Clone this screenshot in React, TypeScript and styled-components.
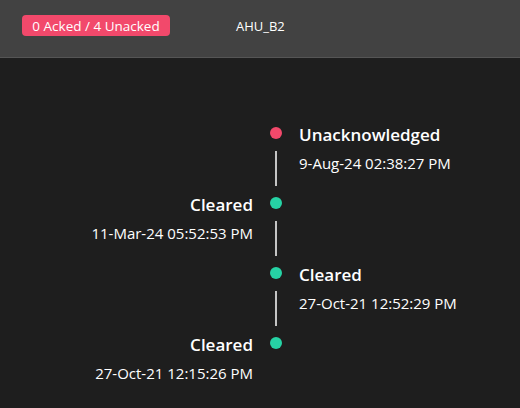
import styled, { createGlobalStyle } from 'styled-components'

const GlobalStyle = createGlobalStyle`
  html, body {
    margin: 0;
    padding: 0;
    background: #1e1e1e;
    font-family: "Open Sans", "Noto Sans", sans-serif;
    color: #ffffff;
  }
`;

interface IAlarmEvent {
  state: string;
  time: string;
  kind: 'unacked' | 'cleared';
  side: 'left' | 'right';
}

const events: IAlarmEvent[] = [
  { state: "Unacknowledged", time: "9-Aug-24 02:38:27 PM", kind: 'unacked', side: 'right' },
  { state: "Cleared", time: "11-Mar-24 05:52:53 PM", kind: 'cleared', side: 'left' },
  { state: "Cleared", time: "27-Oct-21 12:52:29 PM", kind: 'cleared', side: 'right' },
  { state: "Cleared", time: "27-Oct-21 12:15:26 PM", kind: 'cleared', side: 'left' },
];

const Page = styled.div`
  width: 520px;
  height: 408px;
  overflow: hidden;
  background: #1e1e1e;
`;

const Header = styled.header`
  height: 57px;
  display: flex;
  align-items: center;
  gap: 66px;
  padding: 0 0 0 22px;
  background: #424242;
  border-bottom: 1px solid #555555;
`;

const Badge = styled.span`
  display: inline-flex;
  align-items: center;
  justify-content: center;
  width: 148px;
  height: 21px;
  margin-top: -6px;
  border-radius: 4px;
  background: #f2496b;
  color: #ffffff;
  font-size: 13.5px;
`;

const Device = styled.span`
  margin-top: -6px;
  font-size: 13px;
  color: #ffffff;
`;

const Timeline = styled.div`
  padding-top: 69px;
`;

const Item = styled.div`
  display: grid;
  grid-template-columns: 253px 46px 1fr;
  align-items: start;
`;

const Track = styled.div`
  display: flex;
  flex-direction: column;
  align-items: center;
`;

const Dot = styled.span<{ $kind: 'unacked' | 'cleared' }>`
  width: 12px;
  height: 12px;
  border-radius: 50%;
  background: ${(p) => (p.$kind === 'unacked' ? '#f2496b' : '#26d3a5')};
`;

const Connector = styled.span`
  width: 2px;
  height: 35px;
  margin: 12px 0 11px;
  background: #c4c4c4;
`;

const Info = styled.div<{ $side: 'left' | 'right' }>`
  margin-top: -3px;
  text-align: ${(p) => (p.$side === 'left' ? 'right' : 'left')};
  white-space: nowrap;
`;

const State = styled.div`
  font-size: 17px;
  font-weight: 600;
  line-height: 22px;
`;

const Time = styled.div`
  margin-top: 7px;
  font-size: 15px;
  line-height: 20px;
`;

const App = () => {
  return (
    <>
      <GlobalStyle />
      <Page>
        <Header>
          <Badge>0 Acked / 4 Unacked</Badge>
          <Device>AHU_B2</Device>
        </Header>
        <Timeline>
          {events.map((ev, i) => {
            const info = (
              <Info $side={ev.side}>
                <State>{ev.state}</State>
                <Time>{ev.time}</Time>
              </Info>
            );
            return (
              <Item key={i}>
                {ev.side === 'left' ? info : <div />}
                <Track>
                  <Dot $kind={ev.kind} />
                  {i < events.length - 1 && <Connector />}
                </Track>
                {ev.side === 'right' ? info : <div />}
              </Item>
            );
          })}
        </Timeline>
      </Page>
    </>
  )
}

export default App
